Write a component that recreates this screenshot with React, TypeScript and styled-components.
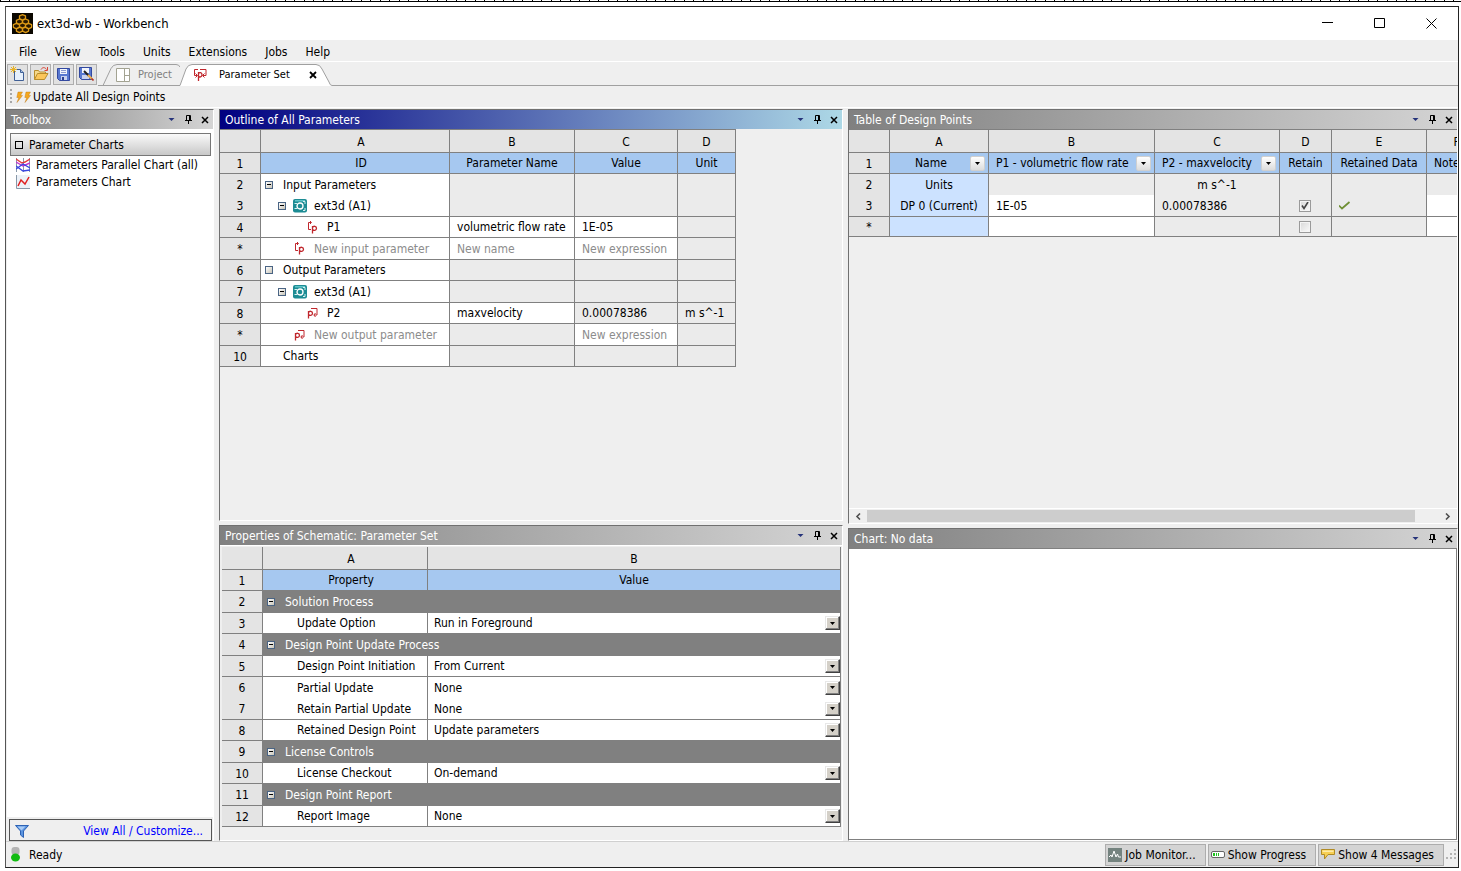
import React from 'react';
import styled, { createGlobalStyle, css } from 'styled-components';

const line = '#808080';
const face = '#efefef';
const uiFont = '"DejaVu Sans Condensed", "DejaVu Sans", sans-serif';

const GlobalStyle = createGlobalStyle`
  * { box-sizing: border-box; }
  body { margin: 0; background: #fff; }
  body, button, input, select { font: 12px/16px ${uiFont}; color: #000; }
  button { padding: 0; border: 0; background: none; }
  svg { display: block; flex: none; }
`;

/* ---------- window frame ---------- */

const Page = styled.div`
  min-height: 100vh;
  display: flex;
  flex-direction: column;
  padding: 0 2px 3px 5px;
`;
const Ruler = styled.div`
  height: 2px;
  margin: 0 -2px 4px -5px;
  border-bottom: 1px solid #000;
  background: repeating-linear-gradient(90deg, #000 0 1px, #fff 1px 9px, #000 9px 10px, #fff 10px 19px);
`;
const Frame = styled.div`
  flex: 1;
  display: flex;
  flex-direction: column;
  border: 1px solid #222;
  border-left-color: #555;
  background: ${face};
`;
const TitleBar = styled.header`
  display: flex;
  align-items: center;
  height: 33px;
  padding: 0 1px 0 6px;
  background: #fff;
`;
const WindowTitle = styled.h1`
  flex: 1;
  margin: 0 0 0 4px;
  font-size: 13px;
  font-weight: 400;
`;
const WindowButton = styled.button`
  width: 52px;
  height: 32px;
  display: grid;
  place-items: center;
`;
const MenuBar = styled.nav`
  display: flex;
  gap: 18px;
  height: 22px;
  padding: 3px 13px 0;
  border-bottom: 1px solid #fff;
`;
const Bar = styled.div`
  display: flex;
  align-items: flex-end;
  height: 24px;
`;
const ToolButtons = styled.div`
  display: flex;
  align-items: center;
  gap: 2px;
  height: 24px;
  padding: 0 1px;
`;
const ToolButton = styled.button`
  width: 21px;
  height: 21px;
  display: grid;
  place-items: center;
  border: 1px solid #adadad;
  background: #e1e1e1;
`;
const Tab = styled.div<{ $active?: boolean }>`
  position: relative;
  display: flex;
  align-items: center;
  width: ${p => (p.$active ? 153 : 82)}px;
  height: 23px;
  margin-left: ${p => (p.$active ? -1 : 0)}px;
  padding-left: ${p => (p.$active ? 14 : 18)}px;
  color: ${p => (p.$active ? '#000' : '#808080')};
  font-size: 11px;
`;
const TabShape = styled.svg`
  position: absolute;
  left: 0;
  top: 0;
`;
const TabButton = styled.button`
  position: relative;
  display: flex;
  align-items: center;
  gap: 8px;
  font-size: 11px;
  color: inherit;
  white-space: nowrap;
`;
const TabLabel = styled.span<{ $wide?: boolean }>`
  margin-left: ${p => (p.$wide ? 4 : 0)}px;
`;
const TabClose = styled.button`
  position: relative;
  margin-left: 19px;
`;
const TabRest = styled.div`
  flex: 1;
  height: 23px;
  border-bottom: 1px solid #a0a0a0;
`;
const ActionBar = styled.div`
  display: flex;
  align-items: center;
  height: 22px;
  padding-left: 4px;
  border-bottom: 1px solid #fff;
`;
const Grip = styled.div`
  width: 2px;
  height: 16px;
  margin-right: 4px;
  background: repeating-linear-gradient(#a8a8a8 0 2px, transparent 2px 4px);
`;
const ActionButton = styled.button`
  display: flex;
  align-items: center;
  gap: 2px;
`;

/* ---------- docked panels ---------- */

const Workspace = styled.main`
  flex: 1;
  display: grid;
  grid-template-columns: 208px minmax(0, 624fr) minmax(0, 610fr);
  gap: 5px;
  padding-top: 1px;
`;
const Column = styled.div<{ $rows: string }>`
  display: grid;
  grid-template-rows: ${p => p.$rows};
  gap: 4px;
  min-width: 0;
`;
const Panel = styled.section<{ $plain?: boolean }>`
  display: flex;
  flex-direction: column;
  min-width: 0;
  border: 1px solid #fff;
  border-top-color: #707070;
  border-left-color: ${p => (p.$plain ? '#fff' : '#707070')};
  ${p => p.$plain && css`border-left-width: 0; border-bottom-width: 0;`}
`;
const PanelHead = styled.div<{ $active?: boolean }>`
  display: flex;
  align-items: center;
  gap: 8px;
  height: 19px;
  flex: none;
  padding: 0 4px 0 5px;
  background: linear-gradient(90deg, ${p => (p.$active ? '#000080, #add8e6' : '#808080, #d4d4d4')});
`;
const PanelTitle = styled.h2`
  flex: 1;
  margin: 0;
  font-size: 12px;
  font-weight: 400;
  color: #fff;
`;
const PanelBody = styled.div<{ $white?: boolean; $inset?: boolean }>`
  flex: 1;
  min-width: 0;
  overflow: hidden;
  background: ${p => (p.$white ? '#fff' : face)};
  ${p => p.$white && css`border: 1px solid ${line}; border-left: 0;`}
  ${p => p.$inset && css`padding: 1px 1px 0 2px; border-top: 1px solid #fff;`}
`;

/* ---------- toolbox ---------- */

const ToolList = styled.div`
  flex: 1;
  padding: 4px 2px 0 3px;
  border-left: 1px solid ${face};
  background: #fff;
`;
const Category = styled.button`
  display: flex;
  align-items: center;
  gap: 6px;
  width: 100%;
  height: 23px;
  padding-left: 4px;
  border: 1px solid #777;
  background: linear-gradient(#fafafa, #c8c8c8);
`;
const CategoryMark = styled.span`
  width: 8px;
  height: 8px;
  border: 1px solid #000;
`;
const Tools = styled.ul`
  margin: 0;
  padding: 0 0 0 6px;
  list-style: none;
`;
const ToolItem = styled.li`
  display: flex;
  align-items: center;
  gap: 6px;
  height: 17px;
  white-space: nowrap;
`;
const ToolFooter = styled.div`
  display: flex;
  align-items: center;
  justify-content: space-between;
  height: 22px;
  margin: 2px 1px 0 3px;
  padding: 2px 8px 0 5px;
  border: 1px solid #555;
`;
const FooterLink = styled.a`
  color: #00f;
  text-decoration: none;
`;

/* ---------- grids ---------- */

const Grid = styled.table<{ $fill?: boolean; $frame?: boolean }>`
  width: ${p => (p.$fill ? '100%' : '1px')};
  table-layout: fixed;
  border-spacing: 0;
  ${p => p.$frame && css`border-top: 1px solid ${line};`}
`;
const Row = styled.tr<{ $h: number; $tree?: boolean }>`
  height: ${p => p.$h}px;
  ${p => p.$tree && css`th:nth-child(2) { padding-left: 12px; }`}
`;
const tones = { white: '#fff', off: '#ebebeb', head: '#a6c8f0', name: '#cce2ff', band: '#808080' };
const cellBase = css<{ $open?: boolean }>`
  padding: 0 7px;
  border-right: 1px solid ${line};
  border-bottom: ${p => (p.$open ? 0 : 1)}px solid ${line};
  font-weight: 400;
  line-height: 16px;
  white-space: nowrap;
`;
const Cell = styled.td<{ $tone?: keyof typeof tones; $open?: boolean; $center?: boolean; $flush?: boolean }>`
  ${cellBase}
  ${p => p.$flush && css`padding: 0;`}
  background: ${p => tones[p.$tone ?? 'white']};
  color: ${p => (p.$tone === 'band' ? '#fff' : '#000')};
  text-align: ${p => (p.$center ? 'center' : 'left')};
`;
const Letter = styled.th`
  ${cellBase}
  padding: 1px 0 0;
  background: #e4e4e4;
`;
const HeadCell = styled.th<{ $left?: boolean }>`
  ${cellBase}
  background: ${tones.head};
  padding: 0 ${p => (p.$left ? 3 : 0)}px 0 ${p => (p.$left ? 7 : 0)}px;
  text-align: ${p => (p.$left ? 'left' : 'center')};
`;
const HeadFilter = styled.div<{ $center?: boolean }>`
  display: flex;
  align-items: center;
  justify-content: space-between;
  ${p => p.$center && css`padding-left: 18px;`}
`;
const FilterButton = styled.button`
  width: 15px;
  height: 15px;
  flex: none;
  display: grid;
  place-items: center;
  border: 1px solid #d0d0d0;
  border-radius: 2px;
  background: linear-gradient(#fff, #dcdcdc);
`;
const Tree = styled.div<{ $indent: number }>`
  display: flex;
  align-items: center;
  padding-left: ${p => p.$indent}px;
`;
const Toggle = styled.button<{ $gap: number; $blank?: boolean }>`
  display: grid;
  place-items: center;
  width: 8px;
  height: 8px;
  flex: none;
  margin-right: ${p => p.$gap}px;
  border: 1px solid #4a6484;
  background: linear-gradient(135deg, #fff, #c9c5b8);
  &::before {
    content: '';
    width: 4px;
    height: ${p => (p.$blank ? 0 : 1)}px;
    background: #000;
  }
`;
const IconSlot = styled.span`
  width: 15px;
  flex: none;
  margin-right: 7px;
  display: grid;
  place-items: center;
`;
const NewEntry = styled.input`
  display: block;
  width: 100%;
  height: 16px;
  padding: 0;
  border: 0;
  background: none;
  outline: 0;
  &::placeholder { color: #8c8c8c; opacity: 1; }
`;
const Check = styled.input`
  appearance: none;
  display: block;
  width: 12px;
  height: 12px;
  margin: 0;
  border: 1px solid #9a9a9a;
  background: linear-gradient(135deg, #d8d8d8, #fafafa);
  box-shadow: inset 0 0 0 1px #f4f4f4;
`;
const CheckWrap = styled.span`
  display: block;
  position: relative;
  width: 12px;
  margin-left: 12px;
`;
const CheckMark = styled.svg`
  position: absolute;
  left: 2px;
  top: 2px;
  pointer-events: none;
`;
const Choice = styled.div`
  position: relative;
  height: 16px;
`;
const ChoiceSelect = styled.select`
  appearance: none;
  display: block;
  width: 100%;
  height: 16px;
  padding: 0 20px 0 6px;
  border: 0;
  border-radius: 0;
  background: none;
`;
const ChoiceArrow = styled.span`
  position: absolute;
  right: 0;
  top: 1px;
  width: 15px;
  height: 14px;
  display: grid;
  place-items: center;
  border: 1px solid;
  border-color: #e8e8e8 #404040 #404040 #e8e8e8;
  box-shadow: inset -1px -1px #808080, inset 1px 1px #fff;
  background: #d4d0c8;
  pointer-events: none;
`;

/* ---------- scroll bar and status bar ---------- */

const ScrollBar = styled.div`
  display: flex;
  align-items: center;
  height: 15px;
  flex: none;
  border-top: 1px solid #fff;
`;
const ScrollButton = styled.button`
  width: 18px;
  height: 12px;
  display: grid;
  place-items: center;
`;
const ScrollTrack = styled.div`
  flex: 1;
  height: 12px;
  padding-right: 4%;
`;
const ScrollThumb = styled.div`
  height: 12px;
  background: #cdcdcd;
`;
const StatusBar = styled.footer`
  display: flex;
  align-items: center;
  gap: 2px;
  height: 26px;
  padding: 0 1px 0 5px;
  border-top: 1px solid #d0d0d0;
`;
const StatusText = styled.span`
  flex: 1;
  margin-left: 7px;
`;
const StatusButton = styled.button`
  display: flex;
  align-items: center;
  gap: 3px;
  height: 22px;
  padding: 0 9px 0 2px;
  border: 1px solid #adadad;
  background: #d4d4d4;
  white-space: nowrap;
`;

/* ---------- drawings ---------- */

const AppIcon = () => {
  const ring = (x: number, y: number) => `M${x} ${y - 2.6}l3 1.3v2.6l-3 1.500-3-1.500v-2.600z`;
  const rings = [[10.5, 4.2], [7.4, 8.6], [13.6, 8.6], [4.4, 13], [10.5, 12.4], [16.6, 13], [7.4, 16.8], [13.6, 16.8]];
  return (
    <svg width="21" height="21" viewBox="0 0 21 21">
      <path fill="#0b0700" d="M0 0h21v21H0z" />
      <path d={rings.map(([x, y]) => ring(x, y)).join('')} fill="#2b1a00" stroke="#dd9a16" strokeWidth="1.300" strokeLinejoin="round" />
    </svg>
  );
};
const MinimizeIcon = () => <svg width="11" height="11"><path d="M0 4.500h11" stroke="#000" /></svg>;
const MaximizeIcon = () => <svg width="11" height="11"><path d="M.5.5h10v9H.5z" fill="none" stroke="#000" /></svg>;
const CloseIcon = () => <svg width="11" height="11"><path d="M.5.5l10 10M10.500.5l-10 10" stroke="#000" /></svg>;

const NewIcon = () => (
  <svg width="16" height="16">
    <path d="M4.500 3.500h6l3 3v8h-9z" fill="#e6f0fc" stroke="#3f5f95" />
    <path d="M10.500 3.500v3h3" fill="#a9c3e6" stroke="#3f5f95" />
    <path d="M3.500 0v7M0 3.500h7M1 1l5 5M6 1L1 6" stroke="#e8b32a" />
  </svg>
);
const OpenIcon = () => (
  <svg width="16" height="16">
    <path d="M1.500 13.500v-9h4l1 1.500h6v2" fill="#f6d98c" stroke="#b98d2c" />
    <path d="M1.500 13.500l3-6h10.500l-3.500 6z" fill="#fbc65a" stroke="#b98d2c" />
    <path d="M8 3.500c1.500-2.500 4-2.500 5.500 0M14.500 1v3.500h-3" fill="none" stroke="#d94335" />
  </svg>
);
const SaveIcon = () => (
  <svg width="13" height="13">
    <path d="M.5.5h12v12h-10l-2-2z" fill="#5878d0" stroke="#3349a0" />
    <path d="M3 1h7v5H3z" fill="#f2f5fc" />
    <path d="M4 2.500h5M4 4.500h5" stroke="#8c9bd0" />
    <path d="M4 8h6v4H4z" fill="#c9d2ee" />
    <path d="M5 9h2v3H5z" fill="#2b3f8f" />
  </svg>
);
const SaveAsIcon = () => (
  <svg width="15" height="14">
    <path d="M.5.5h12v12h-10l-2-2z" fill="#5878d0" stroke="#3349a0" />
    <path d="M3 1h7v5H3z" fill="#f2f5fc" />
    <path d="M3 8h7v4H3z" fill="#c9d2ee" />
    <path d="M5 4l5 5" stroke="#222" strokeWidth="2" />
    <path d="M9 8l4 4" stroke="#efb050" strokeWidth="2" />
    <path d="M12.500 11.500l2 2" stroke="#b03020" strokeWidth="1.600" />
  </svg>
);
const ProjectIcon = () => (
  <svg width="14" height="14">
    <path d="M.5.5h13v13H.5zM8.500.5v13M8.500 7.500h5" fill="#fff" stroke="#a3a392" />
  </svg>
);
const ParameterSetIcon = () => (
  <svg width="14" height="13" fill="none" stroke="#c0272d">
    <path d="M5 1.500H1.500v6H4M2.500 5.500l2 2-2 2M7 1.500h6v6h-3M11.500 5.500l-2 2 2 2" />
    <path d="M5.500 13V4M5.500 5.500c1-1.500 3.500-1 3.500 1.300s-2.500 2.800-3.500 1.300" strokeWidth="1.300" />
  </svg>
);
const TabCloseIcon = () => <svg width="8" height="8"><path d="M1 1l6 6M7 1L1 7" stroke="#000" strokeWidth="1.800" /></svg>;
const BoltsIcon = () => (
  <svg width="15" height="12">
    <path d="M2 1h4.500L4.500 4.500h2L1 11.500l1.800-5H.8zM10 1h4.500l-2 3.500h2L9 11.500l1.800-5H8.800z" fill="#f6a81c" stroke="#b8741a" strokeWidth=".4" />
  </svg>
);
const MenuArrow = () => <svg width="9" height="9"><path d="M1.500 3h6l-3 3z" fill="#26337a" /></svg>;
const PinIcon = () => (
  <svg width="9" height="9">
    <path d="M2.500 5V.5h4V5M1 5.500h7M4.500 6v3" fill="none" stroke="#000" />
    <path d="M5 1h1v4H5z" />
  </svg>
);
const CrossIcon = () => <svg width="8" height="8"><path d="M1 1l6 6M7 1L1 7" stroke="#000" strokeWidth="1.500" /></svg>;
const ParallelIcon = () => (
  <svg width="14" height="14" fill="none">
    <path d="M.5 0v14M7.500 0v14M13.500 0v14" stroke="#8898a8" />
    <path d="M0 1l6 4 3-1 5-3" stroke="#e23b3b" strokeWidth="1.400" />
    <path d="M0 4l7 4 7-3" stroke="#c030d0" strokeWidth="1.400" />
    <path d="M0 11l7-5 7 4M0 8l7 5 7-1" stroke="#3a46e0" strokeWidth="1.400" />
  </svg>
);
const ChartIcon = () => (
  <svg width="14" height="14" fill="none">
    <path d="M1 0h13v13H1z" fill="#edf2f8" />
    <path d="M.5 0v13.500H14" stroke="#8898a8" />
    <path d="M2 11l3-6 4 4 4-7" stroke="#e02020" strokeWidth="1.500" />
  </svg>
);
const FunnelIcon = () => (
  <svg width="14" height="13">
    <path d="M.5.5h13L8.500 6v6.500L5.500 10V6z" fill="#5b94e0" stroke="#2d62b4" />
    <path d="M2.500 1.500h8L6.500 5.500z" fill="#a9cbf5" />
  </svg>
);
const SystemIcon = () => (
  <svg width="14" height="14">
    <rect width="14" height="13.500" rx="2" fill="#1d8c94" />
    <path d="M2 1h10v1.500H2z" fill="#5fc4c8" />
    <circle cx="7" cy="7" r="3" fill="none" stroke="#fff" strokeWidth="1.300" />
    <path d="M1.500 4.500h3M1.500 9.500h3M10 2.500h2v2.500M10 11.500h2V9" fill="none" stroke="#d5f1f1" />
  </svg>
);
const InputIcon = () => (
  <svg width="11" height="13" fill="none" stroke="#c0272d">
    <path d="M4 1.500H1.500v7H4M3 0l1.500 1.500L3 3" />
    <path d="M5.500 12.500V5M5.500 6.500c1-2 4-1.500 4 .8s-3 2.700-4 1" strokeWidth="1.300" />
  </svg>
);
const OutputIcon = () => (
  <svg width="11" height="12" fill="none" stroke="#c0272d">
    <path d="M4 1.500h6v6.500H7M8.500 6L6.800 8l1.700 2" />
    <path d="M1.500 11.500V4M1.500 5.500c1-2 4-1.500 4 .8s-3 2.700-4 1" strokeWidth="1.300" />
  </svg>
);
const SmallArrow = () => <svg width="5" height="3"><path d="M0 0h5L2.500 3z" /></svg>;
const ChevronIcon = ({ right }: { right?: boolean }) => (
  <svg width="6" height="7"><path d={right ? 'M1 .5l3 3-3 3' : 'M5 .5l-3 3 3 3'} fill="none" stroke="#505050" strokeWidth="1.600" /></svg>
);
const TickIcon = () => <svg width="12" height="9"><path d="M0 4.500l3 3L10.500 1" fill="none" stroke="#6f8f34" strokeWidth="1.700" /></svg>;
const LightIcon = () => (
  <svg width="9" height="15">
    <rect x=".5" width="8" height="8" rx="3" fill="#b4b4b4" />
    <ellipse cx="4.500" cy="10.500" rx="4.500" ry="4" fill="#12bb12" />
  </svg>
);
const MonitorIcon = () => (
  <svg width="14" height="14">
    <path d="M0 0h14v14H0z" fill="#74837f" />
    <path d="M1 9l2-2 1 2 2-6 2 6 1.500-3 1 3H13" fill="none" stroke="#fff" />
  </svg>
);
const ProgressIcon = () => (
  <svg width="14" height="7">
    <rect x=".5" y=".5" width="13" height="6" rx="1.500" fill="#fff" stroke="#666" />
    <path d="M2 2h2v3H2zM5 2h1v3H5zM7 2h1v3H7z" fill="#1fc41f" />
  </svg>
);
const MessageIcon = () => (
  <svg width="14" height="11">
    <path d="M.5.5h13v5H7l-3.500 4.500V5.500h-3z" fill="#f7cf52" stroke="#b08a24" />
    <path d="M1.500 1.500h11v1.500h-11z" fill="#fdeaa8" />
  </svg>
);
const SizeGrip = () => (
  <svg width="11" height="11"><path d="M8 0h2v2H8zM4 4h2v2H4zM8 4h2v2H8zM0 8h2v2H0zM4 8h2v2H4zM8 8h2v2H8z" fill="#b4b4b4" /></svg>
);

/* ---------- parts ---------- */

const Head = ({ title, active }: { title: string; active?: boolean }) => (
  <PanelHead $active={active}>
    <PanelTitle>{title}</PanelTitle>
    <button aria-label="Panel menu"><MenuArrow /></button>
    <button aria-label="Pin panel"><PinIcon /></button>
    <button aria-label="Close panel"><CrossIcon /></button>
  </PanelHead>
);
const Cols = ({ widths }: { widths: (number | undefined)[] }) => (
  <colgroup>{widths.map((w, i) => <col key={i} width={w} />)}</colgroup>
);
const Letters = ({ names, tree }: { names: string; tree?: boolean }) => (
  <Row $h={23} $tree={tree}>
    <Letter aria-label="Row" />
    {names.split('').map(n => <Letter key={n} scope="col">{n}</Letter>)}
  </Row>
);
const RowLabel = styled(Letter).attrs({ scope: 'row' })``;

const GroupRow = ({ n, text, open, blank }: { n: string; text: string; open?: boolean; blank?: boolean }) => (
  <Row $h={21}>
    <RowLabel $open={open}>{n}</RowLabel>
    <Cell $flush $open={open}>
      <Tree $indent={4}><Toggle $gap={10} $blank={blank} aria-label="Collapse" />{text}</Tree>
    </Cell>
    <Cell $tone="off" $open={open} /><Cell $tone="off" $open={open} /><Cell $tone="off" $open={open} />
  </Row>
);
const SystemRow = ({ n }: { n: string }) => (
  <Row $h={22}>
    <RowLabel>{n}</RowLabel>
    <Cell $flush>
      <Tree $indent={17}><Toggle $gap={6} aria-label="Collapse" /><IconSlot><SystemIcon /></IconSlot>ext3d (A1)</Tree>
    </Cell>
    <Cell $tone="off" /><Cell $tone="off" /><Cell $tone="off" />
  </Row>
);

const OutlineTable = () => (
  <Grid $frame>
    <Cols widths={[41, 189, 125, 103, 58]} />
    <thead>
      <Letters names="ABCD" tree />
      <Row $h={21} $tree>
        <RowLabel>1</RowLabel><HeadCell>ID</HeadCell><HeadCell>Parameter Name</HeadCell><HeadCell>Value</HeadCell><HeadCell>Unit</HeadCell>
      </Row>
    </thead>
    <tbody>
      <GroupRow n="2" text="Input Parameters" open />
      <SystemRow n="3" />
      <Row $h={21}>
        <RowLabel>4</RowLabel>
        <Cell $flush><Tree $indent={44}><IconSlot><InputIcon /></IconSlot>P1</Tree></Cell>
        <Cell>volumetric flow rate</Cell><Cell>1E-05</Cell><Cell $tone="off" />
      </Row>
      <Row $h={22}>
        <RowLabel>*</RowLabel>
        <Cell $flush><Tree $indent={31}><IconSlot><InputIcon /></IconSlot><NewEntry aria-label="New input parameter" placeholder="New input parameter" /></Tree></Cell>
        <Cell><NewEntry aria-label="New name" placeholder="New name" /></Cell>
        <Cell><NewEntry aria-label="New input expression" placeholder="New expression" /></Cell>
        <Cell $tone="off" />
      </Row>
      <GroupRow n="6" text="Output Parameters" blank />
      <SystemRow n="7" />
      <Row $h={21}>
        <RowLabel>8</RowLabel>
        <Cell $flush><Tree $indent={44}><IconSlot><OutputIcon /></IconSlot>P2</Tree></Cell>
        <Cell>maxvelocity</Cell><Cell $tone="off">0.00078386</Cell><Cell $tone="off">m s^-1</Cell>
      </Row>
      <Row $h={22}>
        <RowLabel>*</RowLabel>
        <Cell $flush><Tree $indent={31}><IconSlot><OutputIcon /></IconSlot><NewEntry aria-label="New output parameter" placeholder="New output parameter" /></Tree></Cell>
        <Cell $tone="off" />
        <Cell><NewEntry aria-label="New output expression" placeholder="New expression" /></Cell>
        <Cell $tone="off" />
      </Row>
      <Row $h={21}>
        <RowLabel>10</RowLabel>
        <Cell $flush><Tree $indent={22}>Charts</Tree></Cell>
        <Cell $tone="off" /><Cell $tone="off" /><Cell $tone="off" />
      </Row>
    </tbody>
  </Grid>
);

type Property = { name: string; value?: string; h: number; open?: boolean };
const properties: Property[] = [
  { name: 'Solution Process', h: 22 },
  { name: 'Update Option', value: 'Run in Foreground', h: 21 },
  { name: 'Design Point Update Process', h: 22 },
  { name: 'Design Point Initiation', value: 'From Current', h: 21 },
  { name: 'Partial Update', value: 'None', h: 21, open: true },
  { name: 'Retain Partial Update', value: 'None', h: 22 },
  { name: 'Retained Design Point', value: 'Update parameters', h: 21 },
  { name: 'License Controls', h: 22 },
  { name: 'License Checkout', value: 'On-demand', h: 21 },
  { name: 'Design Point Report', h: 22 },
  { name: 'Report Image', value: 'None', h: 21 },
];

const PropertiesTable = () => (
  <Grid $fill>
    <Cols widths={[41, 165, undefined]} />
    <thead>
      <Letters names="AB" tree />
      <Row $h={21} $tree><RowLabel>1</RowLabel><HeadCell>Property</HeadCell><HeadCell>Value</HeadCell></Row>
    </thead>
    <tbody>
      {properties.map((p, i) => (
        <Row key={p.name} $h={p.h}>
          <RowLabel $open={p.open}>{i + 2}</RowLabel>
          {p.value ? (
            <>
              <Cell $flush $open={p.open}><Tree as="label" htmlFor={`property-${i}`} $indent={34}>{p.name}</Tree></Cell>
              <Cell $flush $open={p.open}>
                <Choice>
                  <ChoiceSelect id={`property-${i}`} defaultValue={p.value}><option>{p.value}</option></ChoiceSelect>
                  <ChoiceArrow><SmallArrow /></ChoiceArrow>
                </Choice>
              </Cell>
            </>
          ) : (
            <Cell $flush $tone="band" colSpan={2}><Tree $indent={4}><Toggle $gap={10} aria-label="Collapse" />{p.name}</Tree></Cell>
          )}
        </Row>
      ))}
    </tbody>
  </Grid>
);

const Filter = ({ label, center }: { label: string; center?: boolean }) => (
  <HeadCell $left>
    <HeadFilter $center={center}>{label}<FilterButton aria-label={`Filter ${label}`}><SmallArrow /></FilterButton></HeadFilter>
  </HeadCell>
);

const DesignPointsTable = () => (
  <Grid $frame>
    <Cols widths={[41, 99, 166, 125, 52, 95, 60]} />
    <thead>
      <Letters names="ABCDEF" />
      <Row $h={21}>
        <RowLabel>1</RowLabel>
        <Filter label="Name" center />
        <Filter label="P1 - volumetric flow rate" />
        <Filter label="P2 - maxvelocity" />
        <HeadCell>Retain</HeadCell><HeadCell>Retained Data</HeadCell><HeadCell $left>Note</HeadCell>
      </Row>
    </thead>
    <tbody>
      <Row $h={21}>
        <RowLabel $open>2</RowLabel>
        <Cell $tone="name" $center $open>Units</Cell><Cell $tone="off" $open /><Cell $tone="off" $center $open>m s^-1</Cell>
        <Cell $tone="off" $open /><Cell $tone="off" $open /><Cell $tone="off" $open />
      </Row>
      <Row $h={22}>
        <RowLabel>3</RowLabel>
        <Cell $tone="name" $center $flush>DP 0 (Current)</Cell><Cell>1E-05</Cell><Cell $tone="off">0.00078386</Cell>
        <Cell $tone="off">
          <CheckWrap>
            <Check type="checkbox" defaultChecked aria-label="Retain DP 0" />
            <CheckMark width="8" height="8"><path d="M1 3.500l2 3L7 0" fill="none" stroke="#444" strokeWidth="1.600" /></CheckMark>
          </CheckWrap>
        </Cell>
        <Cell $tone="off"><TickIcon /></Cell><Cell />
      </Row>
      <Row $h={20}>
        <RowLabel>*</RowLabel>
        <Cell $tone="name" /><Cell /><Cell $tone="off" />
        <Cell $tone="off"><CheckWrap><Check type="checkbox" aria-label="Retain new design point" /></CheckWrap></Cell>
        <Cell $tone="off" /><Cell />
      </Row>
    </tbody>
  </Grid>
);

export default function App() {
  return (
    <Page>
      <GlobalStyle />
      <Ruler />
      <Frame>
        <TitleBar>
          <AppIcon />
          <WindowTitle>ext3d-wb - Workbench</WindowTitle>
          <WindowButton aria-label="Minimize"><MinimizeIcon /></WindowButton>
          <WindowButton aria-label="Maximize"><MaximizeIcon /></WindowButton>
          <WindowButton aria-label="Close"><CloseIcon /></WindowButton>
        </TitleBar>
        <MenuBar>
          {['File', 'View', 'Tools', 'Units', 'Extensions', 'Jobs', 'Help'].map(m => <button key={m}>{m}</button>)}
        </MenuBar>
        <Bar>
          <ToolButtons>
            <ToolButton aria-label="New"><NewIcon /></ToolButton>
            <ToolButton aria-label="Open"><OpenIcon /></ToolButton>
            <ToolButton aria-label="Save"><SaveIcon /></ToolButton>
            <ToolButton aria-label="Save as"><SaveAsIcon /></ToolButton>
          </ToolButtons>
          <Tab>
            <TabShape width="82" height="23">
              <path d="M5 22.500l8-17Q15 1.500 19 1.500H78Q81 1.500 82 4" fill="none" stroke="#a0a0a0" />
              <path d="M0 22.500h82" stroke="#a0a0a0" />
            </TabShape>
            <TabButton><ProjectIcon />Project</TabButton>
          </Tab>
          <Tab $active>
            <TabShape width="153" height="23">
              <path d="M0 22.500h1L7 6Q9 1.500 13 1.500H137Q141 1.500 143 6l7 13Q151 22.500 153 22.500V23H0z" fill="#fff" />
              <path d="M0 22.500h1L7 6Q9 1.500 13 1.500H137Q141 1.500 143 6l7 13Q151 22.500 153 22.500" fill="none" stroke="#a0a0a0" />
            </TabShape>
            <TabButton><ParameterSetIcon /><TabLabel $wide>Parameter Set</TabLabel></TabButton>
            <TabClose aria-label="Close tab"><TabCloseIcon /></TabClose>
          </Tab>
          <TabRest />
        </Bar>
        <ActionBar>
          <Grip />
          <ActionButton><BoltsIcon />Update All Design Points</ActionButton>
        </ActionBar>

        <Workspace>
          <Panel $plain>
            <Head title="Toolbox" />
            <ToolList>
              <Category><CategoryMark />Parameter Charts</Category>
              <Tools>
                <ToolItem><ParallelIcon />Parameters Parallel Chart (all)</ToolItem>
                <ToolItem><ChartIcon />Parameters Chart</ToolItem>
              </Tools>
            </ToolList>
            <ToolFooter><FunnelIcon /><FooterLink href="#customize">View All / Customize...</FooterLink></ToolFooter>
          </Panel>

          <Column $rows="minmax(0, 412fr) minmax(0, 316fr)">
            <Panel>
              <Head title="Outline of All Parameters" active />
              <PanelBody><OutlineTable /></PanelBody>
            </Panel>
            <Panel>
              <Head title="Properties of Schematic: Parameter Set" />
              <PanelBody $inset><PropertiesTable /></PanelBody>
            </Panel>
          </Column>

          <Column $rows="minmax(0, 415fr) minmax(0, 313fr)">
            <Panel>
              <Head title="Table of Design Points" />
              <PanelBody><DesignPointsTable /></PanelBody>
              <ScrollBar>
                <ScrollButton aria-label="Scroll left"><ChevronIcon /></ScrollButton>
                <ScrollTrack><ScrollThumb /></ScrollTrack>
                <ScrollButton aria-label="Scroll right"><ChevronIcon right /></ScrollButton>
              </ScrollBar>
            </Panel>
            <Panel>
              <Head title="Chart: No data" />
              <PanelBody $white />
            </Panel>
          </Column>
        </Workspace>

        <StatusBar>
          <LightIcon />
          <StatusText>Ready</StatusText>
          <StatusButton><MonitorIcon />Job Monitor...</StatusButton>
          <StatusButton><ProgressIcon />Show Progress</StatusButton>
          <StatusButton><MessageIcon />Show 4 Messages</StatusButton>
          <SizeGrip />
        </StatusBar>
      </Frame>
    </Page>
  );
}
